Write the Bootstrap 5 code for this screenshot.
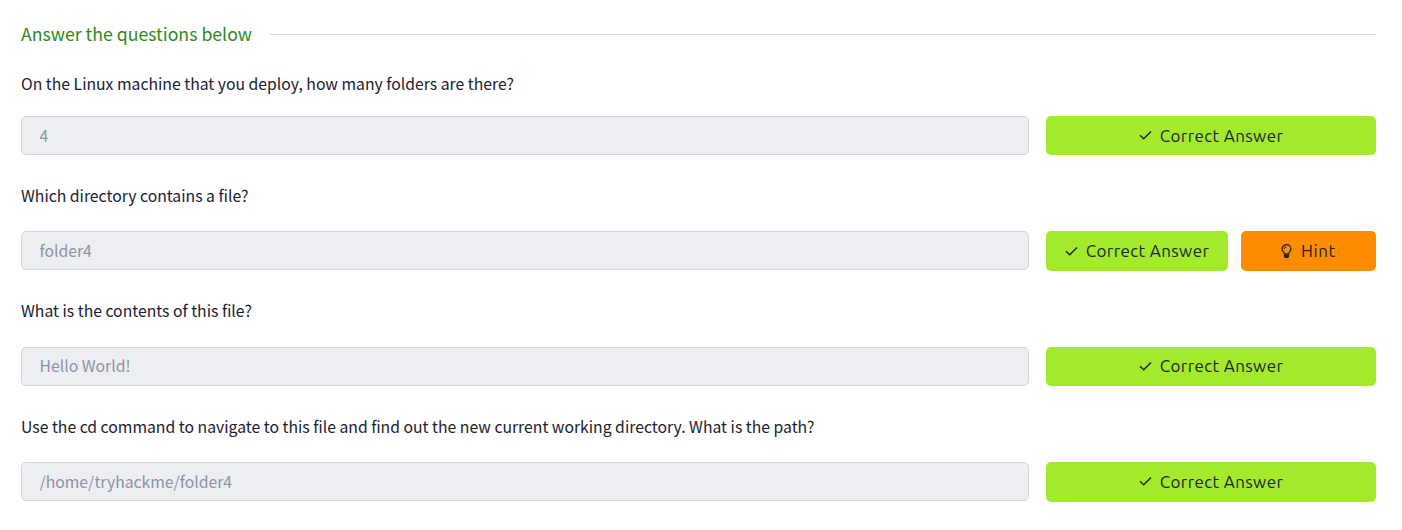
<!DOCTYPE html>
<html lang="en">
<head>
<meta charset="utf-8">
<meta name="viewport" content="width=device-width, initial-scale=1">
<title>Questions</title>
<link href="https://cdn.jsdelivr.net/npm/bootstrap@5.3.0/dist/css/bootstrap.min.css" rel="stylesheet">
<style>
  body { font-family: "Noto Sans CJK JP", "Noto Sans", sans-serif; font-size: 15.75px; color: #212c42; background: #fff; }
  .task { padding: 22px 26px 0 21px; }
  .task-heading { margin-bottom: 26px; }
  .task-title { font-size: 17.7px; line-height: 22px; padding-bottom: 2px; color: #2f8a1c; margin-right: 18px; }
  .rule { height: 1px; background: #d5d9e2; }
  .question { line-height: 24px; margin-bottom: 23.4px; color: #1a2131; }
  .first .question { margin-bottom: 20px; }
  .qa { margin-bottom: 28.6px; }
  .answer-row { gap: 17px; height: 39.4px; }
  .answer-row .form-control { height: 39px; padding: 0 17.5px 1px; font-size: 15.75px; line-height: 36px; border: 1px solid #d1d6df; border-radius: 5px; background: #edeef2; color: #8b93a5; }
  .actions { width: 330px; gap: 13px; flex: none; }
  .actions .btn { font-family: Ubuntu, "Noto Sans", sans-serif; font-size: 17px; letter-spacing: .38px; line-height: 24px; padding: 0; border: 0; border-radius: 5px; color: #1c2538; gap: 8px; }
  .actions .btn-correct { background: #a3ea2a; }
  .actions .btn-hint { background: #ff8b00; width: 135px; flex: none; gap: 9px; letter-spacing: .6px; }
</style>
</head>
<body>
<svg class="d-none">
  <symbol id="check" viewBox="0 0 13 13"><path d="M1 6.2 4.7 9.7 12 2.5" fill="none" stroke="currentColor" stroke-width="1.5"/></symbol>
  <symbol id="bulb" viewBox="0 0 11 15"><path d="M3.5 10C3.5 8.4 1.1 7.6 1.1 5.1a4.4 4.4 0 0 1 8.8 0C9.9 7.6 7.5 8.4 7.5 10Z" fill="none" stroke="currentColor" stroke-width="1.3"/><path d="M3.3 5a2.2 2.2 0 0 1 2.2-2.1" fill="none" stroke="currentColor"/><path d="M2.9 10.8h5.2v1.7L7 14H4l-1.1-1.5z" fill="currentColor"/></symbol>
</svg>
<main class="task">
  <div class="task-heading d-flex align-items-center">
    <h1 class="task-title fw-normal mb-0">Answer the questions below</h1>
    <div class="rule flex-grow-1"></div>
  </div>
  <section class="qa first">
    <p class="question">On the Linux machine that you deploy, how many folders are there?</p>
    <div class="answer-row d-flex">
      <input class="form-control" value="4" disabled>
      <div class="actions d-flex">
        <button class="btn btn-correct flex-grow-1 d-flex align-items-center justify-content-center"><svg width="13" height="13"><use href="#check"/></svg><span>Correct Answer</span></button>
      </div>
    </div>
  </section>
  <section class="qa">
    <p class="question">Which directory contains a file?</p>
    <div class="answer-row d-flex">
      <input class="form-control" value="folder4" disabled>
      <div class="actions d-flex">
        <button class="btn btn-correct flex-grow-1 d-flex align-items-center justify-content-center"><svg width="13" height="13"><use href="#check"/></svg><span>Correct Answer</span></button>
        <button class="btn btn-hint d-flex align-items-center justify-content-center"><svg width="11" height="15"><use href="#bulb"/></svg><span>Hint</span></button>
      </div>
    </div>
  </section>
  <section class="qa">
    <p class="question">What is the contents of this file?</p>
    <div class="answer-row d-flex">
      <input class="form-control" value="Hello World!" disabled>
      <div class="actions d-flex">
        <button class="btn btn-correct flex-grow-1 d-flex align-items-center justify-content-center"><svg width="13" height="13"><use href="#check"/></svg><span>Correct Answer</span></button>
      </div>
    </div>
  </section>
  <section class="qa mb-0">
    <p class="question">Use the cd command to navigate to this file and find out the new current working directory. What is the path?</p>
    <div class="answer-row d-flex">
      <input class="form-control" value="/home/tryhackme/folder4" disabled>
      <div class="actions d-flex">
        <button class="btn btn-correct flex-grow-1 d-flex align-items-center justify-content-center"><svg width="13" height="13"><use href="#check"/></svg><span>Correct Answer</span></button>
      </div>
    </div>
  </section>
</main>
<script src="https://cdn.jsdelivr.net/npm/bootstrap@5.3.0/dist/js/bootstrap.bundle.min.js"></script>
</body>
</html>
